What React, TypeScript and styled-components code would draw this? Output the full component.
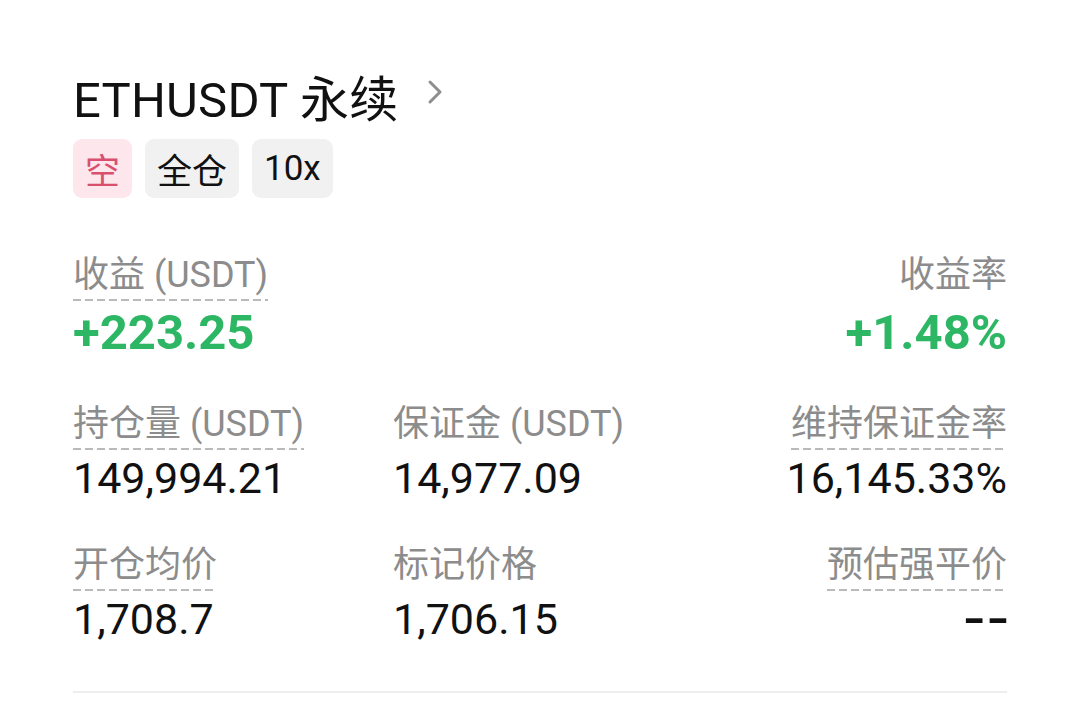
import React from 'react'
import styled, { createGlobalStyle } from 'styled-components'

const GlobalStyle = createGlobalStyle`
    body {
        margin: 0;
        background: #ffffff;
        font-family: Roboto, "Noto Sans CJK SC", sans-serif;
        color: #111111;
    }
`

const Card = styled.div`
    width: 934px;
    padding: 66px 67px 0 73px;
`

const TitleRow = styled.div`
    display: flex;
    align-items: center;
    gap: 28px;
    height: 58px;
`

const Title = styled.h1`
    margin: 0;
    font-size: 49px;
    font-weight: 400;
    letter-spacing: 0.2px;
`

const Chevron = styled.svg`
    width: 18px;
    height: 28px;
    margin-top: -6px;
`

const Tags = styled.div`
    display: flex;
    gap: 13px;
    margin-top: 15px;
`

const Tag = styled.span<{ $tone?: 'short' }>`
    display: inline-flex;
    align-items: center;
    justify-content: center;
    height: 59px;
    padding: 0 12px;
    min-width: 35px;
    border-radius: 9px;
    font-size: 35px;
    background: ${p => (p.$tone === 'short' ? '#fde6ec' : '#f1f1f1')};
    color: ${p => (p.$tone === 'short' ? '#d9506f' : '#111111')};
`

const Grid = styled.div`
    display: grid;
    grid-template-columns: 320px 1fr 1fr;
    margin-top: 54px;
`

const Cell = styled.div<{ $right?: boolean }>`
    display: flex;
    flex-direction: column;
    align-items: ${p => (p.$right ? 'flex-end' : 'flex-start')};
`

const Label = styled.span<{ $dashed?: boolean }>`
    font-size: 36px;
    line-height: 46px;
    color: #8c8c8c;
    padding-bottom: 3px;
    background-image: ${p =>
        p.$dashed
            ? 'linear-gradient(to right, #bababa 66%, transparent 66%)'
            : 'none'};
    background-size: 12px 2px;
    background-repeat: repeat-x;
    background-position: left bottom;
`

const Value = styled.span<{ $gain?: boolean; $big?: boolean }>`
    font-size: ${p => (p.$big ? '49px' : '43px')};
    font-weight: ${p => (p.$big ? 700 : 400)};
    line-height: ${p => (p.$big ? '64px' : '56px')};
    color: ${p => (p.$gain ? '#2db664' : '#111111')};
    margin-bottom: 36px;
`

// the empty-price placeholder is drawn with long, heavy dashes
const Dash = styled.span`
    display: inline-block;
    font-weight: 700;
    margin-right: -3px;
    transform: scaleX(1.4);
    transform-origin: right center;
`

const Divider = styled.hr`
    border: none;
    border-top: 2px solid #eeeeee;
    margin: 8px 0 0;
`

interface Stat {
    label: string
    value: string
    dashed?: boolean
}

const rows: Stat[][] = [
    [
        { label: '持仓量 (USDT)', value: '149,994.21', dashed: true },
        { label: '保证金 (USDT)', value: '14,977.09' },
        { label: '维持保证金率', value: '16,145.33%', dashed: true },
    ],
    [
        { label: '开仓均价', value: '1,708.7', dashed: true },
        { label: '标记价格', value: '1,706.15' },
        { label: '预估强平价', value: '--', dashed: true },
    ],
]

export default function App() {
    return (
        <>
            <GlobalStyle />
            <Card>
                <TitleRow>
                    <Title>ETHUSDT 永续</Title>
                    <Chevron viewBox="0 0 18 28">
                        <path d="M4 4 L14 14 L4 24" fill="none" stroke="#8e8e8e" strokeWidth="3" strokeLinecap="round" strokeLinejoin="round" />
                    </Chevron>
                </TitleRow>
                <Tags>
                    <Tag $tone="short">空</Tag>
                    <Tag>全仓</Tag>
                    <Tag>10x</Tag>
                </Tags>
                <Grid>
                    <Cell>
                        <Label $dashed>收益 (USDT)</Label>
                        <Value $gain $big>+223.25</Value>
                    </Cell>
                    <Cell />
                    <Cell $right>
                        <Label>收益率</Label>
                        <Value $gain $big>+1.48%</Value>
                    </Cell>
                    {rows.map(row =>
                        row.map((s, i) => (
                            <Cell key={s.label} $right={i === 2}>
                                <Label $dashed={s.dashed}>{s.label}</Label>
                                <Value>{s.value === '--' ? <Dash>{s.value}</Dash> : s.value}</Value>
                            </Cell>
                        ))
                    )}
                </Grid>
                <Divider />
            </Card>
        </>
    )
}
